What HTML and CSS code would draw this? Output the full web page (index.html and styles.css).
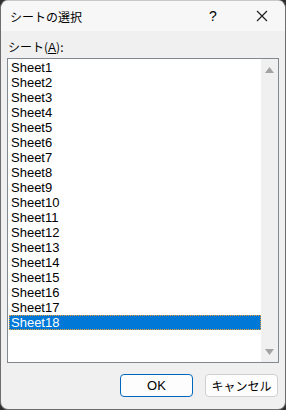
FILE: index.html
```html
<!DOCTYPE html>
<html lang="ja">
<head>
  <meta charset="UTF-8" />
  <title>シートの選択</title>
  <link rel="stylesheet" href="styles.css">
</head>
<body>
  <div class="dialog">
    <div class="titlebar">
      <span class="title">シートの選択</span>
      <span class="help">?</span>
      <span class="close">
        <svg width="12" height="12" viewBox="0 0 12 12"><path d="M1 1L11 11M11 1L1 11" stroke="#1a1a1a" stroke-width="1.1" fill="none"/></svg>
      </span>
    </div>
    <div class="content">
      <div class="label">シート(<u>A</u>):</div>
      <div class="listbox">
        <ul class="items">
          <li>Sheet1</li>
          <li>Sheet2</li>
          <li>Sheet3</li>
          <li>Sheet4</li>
          <li>Sheet5</li>
          <li>Sheet6</li>
          <li>Sheet7</li>
          <li>Sheet8</li>
          <li>Sheet9</li>
          <li>Sheet10</li>
          <li>Sheet11</li>
          <li>Sheet12</li>
          <li>Sheet13</li>
          <li>Sheet14</li>
          <li>Sheet15</li>
          <li>Sheet16</li>
          <li>Sheet17</li>
          <li class="selected">Sheet18</li>
        </ul>
        <div class="scrollbar">
          <svg width="9" height="6" viewBox="0 0 9 6"><path d="M4.5 0L9 6H0Z" fill="#a3a3a3"/></svg>
          <svg width="9" height="6" viewBox="0 0 9 6"><path d="M0 0H9L4.5 6Z" fill="#a3a3a3"/></svg>
        </div>
      </div>
      <div class="buttons">
        <button class="btn primary">OK</button>
        <button class="btn">キャンセル</button>
      </div>
    </div>
  </div>
</body>
</html>
```

FILE: styles.css
```css
html, body {
  margin: 0;
  padding: 0;
  background: #2e2e2e;
}

.dialog {
  width: 284px;
  height: 408px;
  border: 1px solid #6e6e6e;
  border-top-color: #c8c8c8;
  border-radius: 8px;
  background: #f0f0f0;
  overflow: hidden;
  display: flex;
  flex-direction: column;
  font-family: "Noto Sans CJK JP", "Liberation Sans", sans-serif;
  color: #000;
}

.titlebar {
  height: 30px;
  background: #f7f7f7;
  display: flex;
  align-items: center;
  font-size: 12px;
}

.title {
  flex: 1;
  padding-left: 9px;
}

.help {
  width: 46px;
  text-align: center;
  font-family: "Liberation Sans", sans-serif;
  font-size: 14px;
  margin-right: 3px;
}

.close {
  width: 46px;
  display: flex;
  justify-content: center;
}

.content {
  flex: 1;
  display: flex;
  flex-direction: column;
  padding: 8px 6px 0 6px;
}

.label {
  font-size: 12px;
  line-height: 15px;
  padding-left: 1px;
  margin-bottom: 2px;
}

.label u {
  font-family: "Liberation Sans", sans-serif;
}

.listbox {
  height: 303px;
  border: 1px solid #828790;
  background: #fff;
  display: flex;
}

.items {
  list-style: none;
  margin: 0;
  padding: 1px 0 0 1px;
  flex: 1;
  font-family: "Liberation Sans", sans-serif;
  font-size: 13px;
}

.items li {
  height: 15px;
  line-height: 15px;
  padding-left: 2px;
  box-sizing: border-box;
}

.items li.selected {
  background: #0078d7;
  color: #fff;
  outline: 1px dotted #f0a030;
  outline-offset: -1px;
}

.scrollbar {
  width: 17px;
  background: #f0f0f0;
  display: flex;
  flex-direction: column;
  justify-content: space-between;
  align-items: center;
  padding: 8px 0 7px;
}

.buttons {
  display: flex;
  justify-content: flex-end;
  gap: 12px;
  margin-top: 11px;
  padding-right: 1px;
}

.btn {
  width: 73px;
  height: 23px;
  background: #fdfdfd;
  border: 1px solid #d0d0d0;
  border-radius: 4px;
  font-family: "Noto Sans CJK JP", "Liberation Sans", sans-serif;
  font-size: 12px;
  padding: 0;
  color: #000;
}

.btn.primary {
  border-color: #0067c0;
  font-family: "Liberation Sans", sans-serif;
  font-size: 13px;
}
```
